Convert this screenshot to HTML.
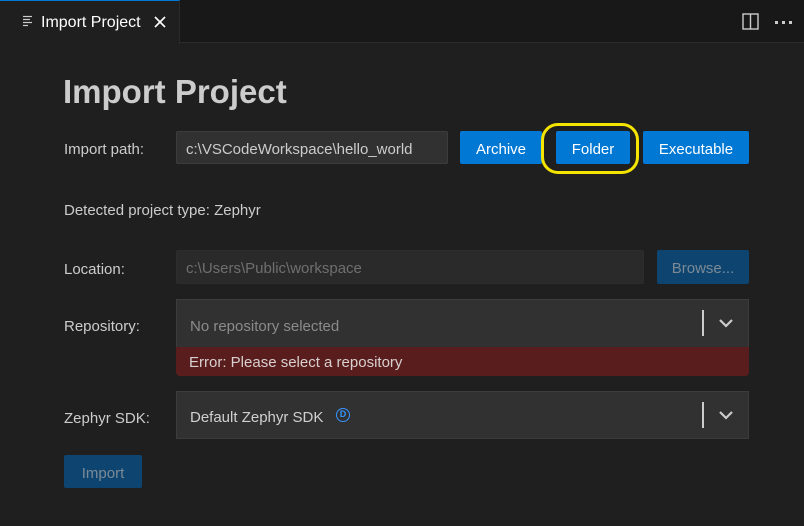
<!DOCTYPE html>
<html><head><style>
*{margin:0;padding:0;box-sizing:border-box}
body{width:804px;height:526px;background:#1f1f1f;font-family:"Liberation Sans",sans-serif;color:#cccccc;position:relative;overflow:hidden;font-size:15px}
.abs{position:absolute}
.tabbar{left:0;top:0;width:804px;height:43px;background:#181818;border-bottom:1px solid #2b2b2b}
.tab{left:0;top:0;width:180px;height:44px;background:#1f1f1f;border-top:1px solid #0078d4;border-right:1px solid #2b2b2b}
.lbl{font-size:15px;color:#cccccc}
.inp{background:#313131;border:1px solid #3c3c3c;border-radius:2px;padding-left:9px;line-height:35px;font-size:15px}
.btn{background:#0078d4;color:#fff;border-radius:2px;text-align:center;line-height:37px;font-size:15px}
.sel{background:#313131;border:1px solid #3c3c3c;left:176px;width:573px}
</style></head><body>
<div class="abs tabbar"></div>
<div class="abs tab"></div>
<svg class="abs" style="left:22px;top:15px" width="12" height="12" viewBox="0 0 12 12"><g stroke="#ccc" stroke-width="1.2"><line x1="1" y1="1.5" x2="10" y2="1.5"/><line x1="1" y1="4.5" x2="8" y2="4.5"/><line x1="1" y1="7.5" x2="10" y2="7.5"/><line x1="1" y1="10.5" x2="6" y2="10.5"/></g></svg>
<div class="abs" style="left:41px;top:14px;font-size:16px;color:#fff">Import Project</div>
<svg class="abs" style="left:154px;top:16px" width="12" height="12" viewBox="0 0 12 12"><path d="M1 1L11 11M11 1L1 11" stroke="#fff" stroke-width="1.6"/></svg>
<svg class="abs" style="left:742px;top:13px" width="17" height="17" viewBox="0 0 17 17"><rect x="1" y="1" width="15" height="15" fill="none" stroke="#ccc" stroke-width="1.4"/><line x1="8.5" y1="1" x2="8.5" y2="16" stroke="#ccc" stroke-width="1.4"/></svg>
<div class="abs" style="left:775px;top:21px;width:3px;height:3px;background:#ccc"></div>
<div class="abs" style="left:782px;top:21px;width:3px;height:3px;background:#ccc"></div>
<div class="abs" style="left:789px;top:21px;width:3px;height:3px;background:#ccc"></div>

<div class="abs" style="left:63px;top:73px;font-size:33px;font-weight:bold;color:#cccccc">Import Project</div>

<div class="abs lbl" style="left:64px;top:141px">Import path:</div>
<div class="abs inp" style="left:176px;top:131px;width:272px;height:33px">c:\VSCodeWorkspace\hello_world</div>
<div class="abs btn" style="left:460px;top:131px;width:82px;height:33px">Archive</div>
<div class="abs btn" style="left:556px;top:131px;width:74px;height:33px">Folder</div>
<div class="abs btn" style="left:643px;top:131px;width:106px;height:33px">Executable</div>
<div class="abs" style="left:541px;top:123px;width:98px;height:51px;border:3px solid #f5e300;border-radius:17px"></div>

<div class="abs lbl" style="left:64px;top:202px">Detected project type: Zephyr</div>

<div class="abs lbl" style="left:64px;top:261px">Location:</div>
<div class="abs inp" style="left:176px;top:250px;width:468px;height:34px;background:#2a2a2a;border-color:#2d2d2d;color:#6f6f6f">c:\Users\Public\workspace</div>
<div class="abs btn" style="left:657px;top:250px;width:92px;height:34px;background:#0e4570;color:#7b8a96">Browse...</div>

<div class="abs lbl" style="left:64px;top:318px">Repository:</div>
<div class="abs sel" style="top:299px;height:49px"></div>
<div class="abs" style="left:190px;top:318px;color:#8b8b8b">No repository selected</div>
<div class="abs" style="left:702px;top:310px;width:2px;height:26px;background:#ccc"></div>
<svg class="abs" style="left:718px;top:318px" width="16" height="10" viewBox="0 0 16 10"><path d="M2 2L8 8L14 2" fill="none" stroke="#ccc" stroke-width="2.2"/></svg>
<div class="abs" style="left:176px;top:347px;width:573px;height:29px;background:#5a1d1d;border-radius:0 0 4px 4px;padding-left:13px;line-height:31px;color:#d8d0d0">Error: Please select a repository</div>

<div class="abs lbl" style="left:64px;top:410px">Zephyr SDK:</div>
<div class="abs sel" style="top:391px;height:48px"></div>
<div class="abs" style="left:190px;top:409px;color:#d0d0d0;font-size:15px;white-space:nowrap">Default Zephyr SDK</div>
<div class="abs" style="left:336px;top:408px;width:14px;height:14px;border:1.5px solid #3794ff;border-radius:50%;color:#3794ff;font-size:9px;font-weight:bold;text-align:center;line-height:11px">D</div>
<div class="abs" style="left:702px;top:402px;width:2px;height:26px;background:#ccc"></div>
<svg class="abs" style="left:718px;top:410px" width="16" height="10" viewBox="0 0 16 10"><path d="M2 2L8 8L14 2" fill="none" stroke="#ccc" stroke-width="2.2"/></svg>

<div class="abs btn" style="left:64px;top:455px;width:78px;height:33px;background:#0e4570;color:#7b8a96">Import</div>
</body></html>
